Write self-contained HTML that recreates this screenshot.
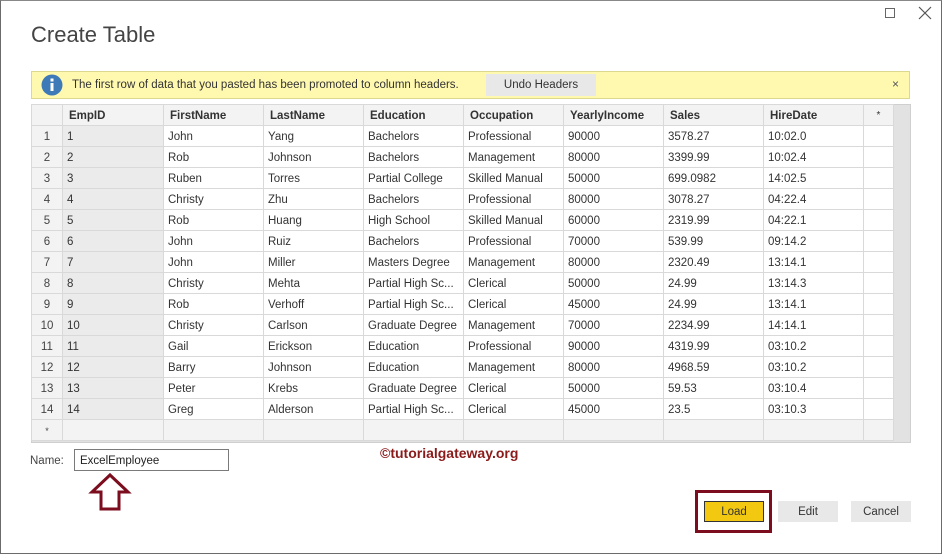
<!DOCTYPE html><html><head><style>
*{margin:0;padding:0;box-sizing:border-box}
body{width:942px;height:554px;background:#fff;font-family:"Liberation Sans",sans-serif;font-size:12px;color:#333;position:relative;overflow:hidden}
.win{position:absolute;left:0;top:0;width:942px;height:554px;border:1px solid #6b6b6b;border-top-color:#888}
.abs{position:absolute}
table{border-collapse:collapse;table-layout:fixed;width:862px}
td{height:21px;border:1px solid #d9d9d9;padding:2px 4px 0;white-space:nowrap;overflow:hidden;font-size:11.5px;color:#333;background:#fff}
tr.h td{background:#f3f3f3;font-weight:bold;font-size:11.5px;color:#333;padding-left:6px}
td.n{background:#f3f3f3;text-align:center;color:#444}
td.e{background:#ebebeb}
td.s{background:#f3f3f3}
.btn{position:absolute;height:21px;background:#e8e8e8;text-align:center;line-height:22px;font-size:11.5px;color:#333}
</style></head><body>
<div class="win"></div>
<div class="abs" style="left:31px;top:22px;font-size:22px;color:#444">Create Table</div>
<div class="abs" style="left:885px;top:8px;width:10px;height:10px;border:1px solid #666"></div>
<svg class="abs" style="left:918px;top:6px" width="14" height="14"><path d="M1 1L13 13M13 1L1 13" stroke="#555" stroke-width="1.2"/></svg>
<div class="abs" style="left:31px;top:71px;width:879px;height:28px;background:#fff9b0;border:1px solid #dcd890"></div>
<svg class="abs" style="left:41px;top:74px" width="22" height="22"><circle cx="11" cy="11" r="10.5" fill="#3f7ab8"/><rect x="9.5" y="9" width="3" height="8" fill="#fff"/><rect x="9.5" y="4.5" width="3" height="3" fill="#fff"/></svg>
<div class="abs" style="left:72px;top:79px;font-size:11.5px;color:#333">The first row of data that you pasted has been promoted to column headers.</div>
<div class="btn" style="left:486px;top:74px;width:110px;height:22px;line-height:22px">Undo Headers</div>
<div class="abs" style="left:892px;top:77px;font-size:12px;color:#555">×</div>
<div class="abs" style="left:31px;top:104px;width:880px;height:339px;background:#e2e2e2;border:1px solid #cfcfcf"></div>
<table class="abs" style="left:31px;top:104px">
<colgroup><col style="width:31px"><col style="width:101px"><col style="width:100px"><col style="width:100px"><col style="width:100px"><col style="width:100px"><col style="width:100px"><col style="width:100px"><col style="width:100px"><col style="width:30px"></colgroup>
<tr class="h"><td class="n"></td><td class="e">EmpID</td><td>FirstName</td><td>LastName</td><td>Education</td><td>Occupation</td><td>YearlyIncome</td><td>Sales</td><td>HireDate</td><td style="text-align:center;font-weight:normal;font-size:10px;padding:0">*</td></tr>
<tr><td class="n">1</td><td class="e">1</td><td>John</td><td>Yang</td><td>Bachelors</td><td>Professional</td><td>90000</td><td>3578.27</td><td>10:02.0</td><td></td></tr>
<tr><td class="n">2</td><td class="e">2</td><td>Rob</td><td>Johnson</td><td>Bachelors</td><td>Management</td><td>80000</td><td>3399.99</td><td>10:02.4</td><td></td></tr>
<tr><td class="n">3</td><td class="e">3</td><td>Ruben</td><td>Torres</td><td>Partial College</td><td>Skilled Manual</td><td>50000</td><td>699.0982</td><td>14:02.5</td><td></td></tr>
<tr><td class="n">4</td><td class="e">4</td><td>Christy</td><td>Zhu</td><td>Bachelors</td><td>Professional</td><td>80000</td><td>3078.27</td><td>04:22.4</td><td></td></tr>
<tr><td class="n">5</td><td class="e">5</td><td>Rob</td><td>Huang</td><td>High School</td><td>Skilled Manual</td><td>60000</td><td>2319.99</td><td>04:22.1</td><td></td></tr>
<tr><td class="n">6</td><td class="e">6</td><td>John</td><td>Ruiz</td><td>Bachelors</td><td>Professional</td><td>70000</td><td>539.99</td><td>09:14.2</td><td></td></tr>
<tr><td class="n">7</td><td class="e">7</td><td>John</td><td>Miller</td><td>Masters Degree</td><td>Management</td><td>80000</td><td>2320.49</td><td>13:14.1</td><td></td></tr>
<tr><td class="n">8</td><td class="e">8</td><td>Christy</td><td>Mehta</td><td>Partial High Sc...</td><td>Clerical</td><td>50000</td><td>24.99</td><td>13:14.3</td><td></td></tr>
<tr><td class="n">9</td><td class="e">9</td><td>Rob</td><td>Verhoff</td><td>Partial High Sc...</td><td>Clerical</td><td>45000</td><td>24.99</td><td>13:14.1</td><td></td></tr>
<tr><td class="n">10</td><td class="e">10</td><td>Christy</td><td>Carlson</td><td>Graduate Degree</td><td>Management</td><td>70000</td><td>2234.99</td><td>14:14.1</td><td></td></tr>
<tr><td class="n">11</td><td class="e">11</td><td>Gail</td><td>Erickson</td><td>Education</td><td>Professional</td><td>90000</td><td>4319.99</td><td>03:10.2</td><td></td></tr>
<tr><td class="n">12</td><td class="e">12</td><td>Barry</td><td>Johnson</td><td>Education</td><td>Management</td><td>80000</td><td>4968.59</td><td>03:10.2</td><td></td></tr>
<tr><td class="n">13</td><td class="e">13</td><td>Peter</td><td>Krebs</td><td>Graduate Degree</td><td>Clerical</td><td>50000</td><td>59.53</td><td>03:10.4</td><td></td></tr>
<tr><td class="n">14</td><td class="e">14</td><td>Greg</td><td>Alderson</td><td>Partial High Sc...</td><td>Clerical</td><td>45000</td><td>23.5</td><td>03:10.3</td><td></td></tr>
<tr><td class="n" style="font-size:9px">*</td><td class="s"></td><td class="s"></td><td class="s"></td><td class="s"></td><td class="s"></td><td class="s"></td><td class="s"></td><td class="s"></td><td class="s"></td></tr>
</table>
<div class="abs" style="left:30px;top:455px;color:#444;font-size:11.5px">Name:</div>
<div class="abs" style="left:74px;top:449px;width:155px;height:22px;border:1px solid #7a7a7a;padding:5px 5px 0;font-size:11.5px;color:#222">ExcelEmployee</div>
<svg class="abs" style="left:88px;top:472px" width="44" height="40"><path d="M22 3L40 20H31V37H13V20H4Z" fill="#fff" stroke="#7b0d1e" stroke-width="3"/></svg>
<div class="abs" style="left:380px;top:445px;font-size:14px;font-weight:bold;color:#8b1a1a">©tutorialgateway.org</div>
<div class="abs" style="left:695px;top:490px;width:77px;height:43px;border:3px solid #7b0d1e"></div>
<div class="btn" style="left:704px;top:501px;width:60px;background:#f2c811;border:1px solid #333;line-height:20px">Load</div>
<div class="btn" style="left:778px;top:501px;width:60px">Edit</div>
<div class="btn" style="left:851px;top:501px;width:60px">Cancel</div>
</body></html>
